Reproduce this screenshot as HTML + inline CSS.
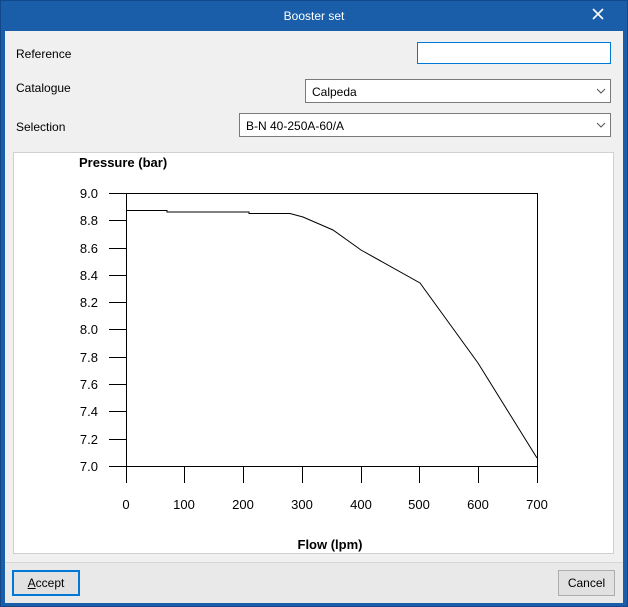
<!DOCTYPE html>
<html><head><meta charset="utf-8"><style>
*{margin:0;padding:0;box-sizing:border-box}
body{width:628px;height:607px;overflow:hidden;background:#1a5ea9;font-family:"Liberation Sans",sans-serif;font-size:12px;color:#000;position:relative}
.abs{position:absolute}
#win{left:0;top:0;width:628px;height:607px;border:1px solid #12488a;background:#1a5ea9}
#title{left:0;top:9px;width:628px;text-align:center;color:#fff;font-size:12px}
#close{left:591px;top:7px;color:#fff;font-size:16px}
#client{left:5px;top:31px;width:618px;height:572px;background:#f0f0f0}
#footer{left:5px;top:562px;width:618px;height:41px;background:#e9e9e9;border-top:1px solid #d6d6d6}
.lbl{font-size:12px}
.field{background:#fff;border:1px solid #7a7a7a;height:24px}
.combo span{position:absolute;left:6px;top:5px}
.arrow{position:absolute;right:4px;top:6px}
#chart{left:13px;top:152px;width:601px;height:402px;background:#fff;border:1px solid #d0d0d0}
.btn{border:1px solid #adadad;background:#e1e1e1;height:26px;text-align:center;line-height:24px}
</style></head><body>
<div id="win" class="abs"></div>
<div id="title" class="abs">Booster set</div>
<div id="close" class="abs"><svg width="14" height="14"><path d="M2 2L12 12M12 2L2 12" stroke="#fff" stroke-width="1.6"/></svg></div>
<div id="client" class="abs"></div>
<div id="footer" class="abs"></div>
<div class="abs lbl" style="left:16px;top:47px">Reference</div>
<div class="abs field" style="left:417px;top:42px;width:194px;height:22px;border-color:#0078d7"></div>
<div class="abs lbl" style="left:16px;top:81px">Catalogue</div>
<div class="abs field combo" style="left:305px;top:79px;width:306px"><span>Calpeda</span><svg class="arrow" width="10" height="10"><path d="M1 3L5 7L9 3" stroke="#555" fill="none"/></svg></div>
<div class="abs lbl" style="left:16px;top:120px">Selection</div>
<div class="abs field combo" style="left:239px;top:113px;width:372px"><span>B-N 40-250A-60/A</span><svg class="arrow" width="10" height="10"><path d="M1 3L5 7L9 3" stroke="#555" fill="none"/></svg></div>
<div id="chart" class="abs"></div>
<svg class="abs" style="left:0;top:0" width="628" height="607" font-family="Liberation Sans, sans-serif" font-size="13">
<text x="79" y="167" font-weight="bold" font-size="13">Pressure (bar)</text>
<text x="330" y="549" font-weight="bold" font-size="13" text-anchor="middle">Flow (lpm)</text>
<g stroke="#000" stroke-width="1" fill="none" shape-rendering="crispEdges">
<rect x="126.5" y="193.5" width="411" height="273"/>
<path d="M109 193.5H126M109 220.5H126M109 248.5H126M109 275.5H126M109 302.5H126M109 329.5H126M109 357.5H126M109 384.5H126M109 411.5H126M109 439.5H126M109 466.5H126"/>
<path d="M126.5 466V483M184.5 466V483M243.5 466V483M302.5 466V483M361.5 466V483M419.5 466V483M478.5 466V483M537.5 466V483"/>
</g>
<path d="M126 210.5H167V212H249V213.5H290L303 217L333 230L361 250L420 283L478 363L537 458" stroke="#000" stroke-width="1" fill="none"/>
<g text-anchor="end">
<text x="98" y="198">9.0</text><text x="98" y="225">8.8</text><text x="98" y="253">8.6</text><text x="98" y="280">8.4</text><text x="98" y="307">8.2</text><text x="98" y="334">8.0</text><text x="98" y="362">7.8</text><text x="98" y="389">7.6</text><text x="98" y="416">7.4</text><text x="98" y="444">7.2</text><text x="98" y="471">7.0</text>
</g>
<g text-anchor="middle">
<text x="126" y="509">0</text><text x="184" y="509">100</text><text x="243" y="509">200</text><text x="302" y="509">300</text><text x="361" y="509">400</text><text x="419" y="509">500</text><text x="478" y="509">600</text><text x="537" y="509">700</text>
</g>
</svg>
<div class="abs btn" style="left:12px;top:570px;width:68px;border:2px solid #0078d7;line-height:22px"><u>A</u>ccept</div>
<div class="abs btn" style="left:558px;top:570px;width:57px">Cancel</div>
</body></html>
